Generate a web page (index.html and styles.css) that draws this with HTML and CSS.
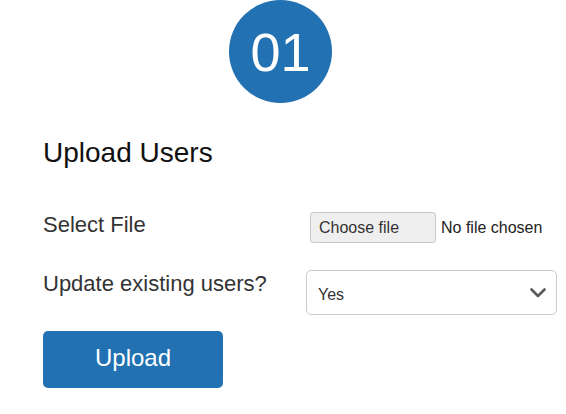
FILE: index.html
```html
<!DOCTYPE html>
<html lang="en">
<head>
<meta charset="utf-8">
<title>Upload Users</title>
<link rel="stylesheet" href="styles.css">
</head>
<body>
<div class="page">
  <div class="badge">01</div>
  <h1 class="title">Upload Users</h1>
  <form class="form">
    <div class="row">
      <label class="label">Select File</label>
      <div class="file-control">
        <span class="file-btn">Choose file</span>
        <span class="file-name">No file chosen</span>
      </div>
    </div>
    <div class="row row-select">
      <label class="label">Update existing users?</label>
      <div class="select">
        <span class="select-value">Yes</span>
        <svg class="chevron" width="16" height="10" viewBox="0 0 16 10" aria-hidden="true">
          <path d="M1.5 1.5 L8 8 L14.5 1.5" fill="none" stroke="#5a5a5a" stroke-width="2.6" stroke-linecap="round" stroke-linejoin="round"/>
        </svg>
      </div>
    </div>
    <button type="button" class="upload-btn">Upload</button>
  </form>
</div>
</body>
</html>
```

FILE: styles.css
```css
html, body {
  margin: 0;
  padding: 0;
  background: #ffffff;
}

body {
  font-family: "Liberation Sans", Arial, sans-serif;
  color: #333333;
}

.page {
  padding-left: 43px;
}

.badge {
  width: 103px;
  height: 103px;
  margin-left: 186px;
  border-radius: 50%;
  background: #2271b2;
  color: #ffffff;
  font-size: 54px;
  line-height: 54px;
  display: flex;
  align-items: center;
  justify-content: center;
  padding-top: 1px;
  box-sizing: border-box;
}

.title {
  margin: 34px 0 0 0;
  font-size: 28px;
  line-height: 32px;
  font-weight: normal;
  color: #111111;
}

.form {
  margin-top: 41px;
}

.row {
  display: grid;
  grid-template-columns: 263px auto;
  align-items: start;
}

.row-select {
  margin-top: 26px;
}

.label {
  padding-top: 2px;
  font-size: 22px;
  line-height: 26px;
  color: #333333;
}

.file-control {
  display: flex;
  align-items: center;
  gap: 5px;
  margin-top: 2px;
  margin-left: 4px;
}

.file-btn {
  box-sizing: border-box;
  width: 126px;
  height: 31px;
  padding-left: 8px;
  border: 1px solid #c9c9c9;
  border-radius: 3px;
  background: #efefef;
  font-size: 16px;
  line-height: 29px;
  color: #333333;
}

.file-name {
  font-size: 16px;
  color: #222222;
}

.select {
  box-sizing: border-box;
  width: 251px;
  height: 45px;
  margin-top: 1px;
  padding: 0 10px 0 11px;
  border: 1px solid #cccccc;
  border-radius: 5px;
  display: flex;
  align-items: center;
  justify-content: space-between;
  font-size: 16px;
  color: #333333;
}

.select-value {
  padding-top: 4px;
}

.chevron {
  display: block;
}

.upload-btn {
  display: block;
  margin-top: 16px;
  width: 180px;
  height: 57px;
  border: none;
  border-radius: 5px;
  background: #2271b2;
  color: #ffffff;
  font-family: "Liberation Sans", Arial, sans-serif;
  font-size: 24px;
  padding: 0 0 3px 0;
}
```
